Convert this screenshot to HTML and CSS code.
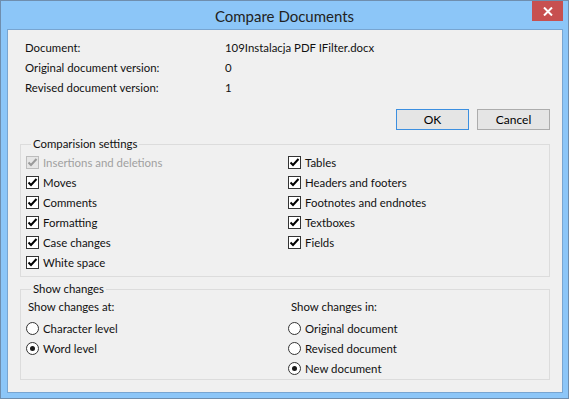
FILE: index.html
```html
<!DOCTYPE html>
<html lang="en">

<head>
    <meta charset="UTF-8">
    <meta name="viewport" content="width=device-width, initial-scale=1.0">
    <title>Compare Documents</title>
    <link rel="icon" href="data:,">
    <link rel="stylesheet" href="styles.css">
</head>

<body>
    <div class="window">
        <div class="titlebar">
            <span class="title">Compare Documents</span>
            <button class="close" aria-label="Close">
                <svg width="10" height="9" viewBox="0 0 10 9">
                    <path d="M1 0.5 L9 8.5 M9 0.5 L1 8.5" stroke="#fff" stroke-width="2" fill="none" />
                </svg>
            </button>
        </div>

        <div class="client">
            <div class="info">
                <div class="info-row"><span class="key">Document:</span><span>109Instalacja PDF IFilter.docx</span></div>
                <div class="info-row"><span class="key">Original document version:</span><span>0</span></div>
                <div class="info-row"><span class="key">Revised document version:</span><span>1</span></div>
            </div>

            <div class="buttons">
                <button class="btn btn-default">OK</button>
                <button class="btn">Cancel</button>
            </div>

            <fieldset class="group">
                <legend>Comparision settings</legend>
                <div class="columns">
                    <div class="col">
                        <label class="check disabled"><span class="box"><svg width="11" height="11" viewBox="0 0 11 11"><path d="M1.5 5.5 L4 8 L9.5 2" /></svg></span>Insertions and deletions</label>
                        <label class="check"><span class="box"><svg width="11" height="11" viewBox="0 0 11 11"><path d="M1.5 5.5 L4 8 L9.5 2" /></svg></span>Moves</label>
                        <label class="check"><span class="box"><svg width="11" height="11" viewBox="0 0 11 11"><path d="M1.5 5.5 L4 8 L9.5 2" /></svg></span>Comments</label>
                        <label class="check"><span class="box"><svg width="11" height="11" viewBox="0 0 11 11"><path d="M1.5 5.5 L4 8 L9.5 2" /></svg></span>Formatting</label>
                        <label class="check"><span class="box"><svg width="11" height="11" viewBox="0 0 11 11"><path d="M1.5 5.5 L4 8 L9.5 2" /></svg></span>Case changes</label>
                        <label class="check"><span class="box"><svg width="11" height="11" viewBox="0 0 11 11"><path d="M1.5 5.5 L4 8 L9.5 2" /></svg></span>White space</label>
                    </div>
                    <div class="col">
                        <label class="check"><span class="box"><svg width="11" height="11" viewBox="0 0 11 11"><path d="M1.5 5.5 L4 8 L9.5 2" /></svg></span>Tables</label>
                        <label class="check"><span class="box"><svg width="11" height="11" viewBox="0 0 11 11"><path d="M1.5 5.5 L4 8 L9.5 2" /></svg></span>Headers and footers</label>
                        <label class="check"><span class="box"><svg width="11" height="11" viewBox="0 0 11 11"><path d="M1.5 5.5 L4 8 L9.5 2" /></svg></span>Footnotes and endnotes</label>
                        <label class="check"><span class="box"><svg width="11" height="11" viewBox="0 0 11 11"><path d="M1.5 5.5 L4 8 L9.5 2" /></svg></span>Textboxes</label>
                        <label class="check"><span class="box"><svg width="11" height="11" viewBox="0 0 11 11"><path d="M1.5 5.5 L4 8 L9.5 2" /></svg></span>Fields</label>
                    </div>
                </div>
            </fieldset>

            <fieldset class="group group-changes">
                <legend>Show changes</legend>
                <div class="columns">
                    <div class="col">
                        <div class="caption">Show changes at:</div>
                        <label class="radio"><span class="dot"></span>Character level</label>
                        <label class="radio selected"><span class="dot"></span>Word level</label>
                    </div>
                    <div class="col">
                        <div class="caption caption-in">Show changes in:</div>
                        <label class="radio"><span class="dot"></span>Original document</label>
                        <label class="radio"><span class="dot"></span>Revised document</label>
                        <label class="radio selected"><span class="dot"></span>New document</label>
                    </div>
                </div>
            </fieldset>
        </div>
    </div>
</body>

</html>
```

FILE: styles.css
```css
body {
    margin: 0;
    font-family: Lato, "Noto Sans", sans-serif;
    font-size: 11.4px;
    color: #111;
}

.window {
    width: 569px;
    height: 399px;
    box-sizing: border-box;
    border: 1px solid #6f8eae;
    background-color: #8cc6f8;
    display: flex;
    flex-direction: column;
}

.titlebar {
    position: relative;
    height: 28px;
    display: flex;
    justify-content: center;
    align-items: center;
}

.title {
    font-size: 15px;
    color: #222;
    padding-top: 1px;
}

.close {
    position: absolute;
    top: 0;
    right: 5px;
    width: 31px;
    height: 20px;
    padding: 0;
    border: none;
    background-color: #c75050;
    display: flex;
    justify-content: center;
    align-items: center;
}

.client {
    margin: 0 5px 5px 6px;
    flex: 1;
    background-color: #f0f0f0;
    border: 1px solid #78a5d1;
    padding: 0 12px;
}

.info {
    padding: 7px 0 0 5px;
}

.info-row {
    height: 20px;
    display: flex;
    align-items: center;
}

.key {
    width: 200px;
}

.buttons {
    margin-top: 12px;
    display: flex;
    justify-content: flex-end;
    gap: 8px;
}

.btn {
    width: 73px;
    height: 21px;
    padding: 0;
    font-family: inherit;
    font-size: 12px;
    color: #000;
    background-color: #e5e5e5;
    border: 1px solid #acacac;
}

.btn-default {
    border-color: #3c8fe0;
}

.group {
    margin: 6px 0 0;
    padding: 0 5px 4px;
    border: 1px solid #dcdcdc;
}

.group legend {
    margin-left: 5px;
    padding: 0 2px;
    line-height: 16px;
}

.group-changes {
    margin-top: 4px;
    padding-bottom: 1px;
}

.columns {
    display: grid;
    grid-template-columns: 262px 1fr;
}

.check,
.radio {
    height: 20px;
    display: flex;
    align-items: center;
    gap: 4px;
}

.box {
    width: 11px;
    height: 11px;
    border: 1px solid #333;
    background-color: #fff;
    display: flex;
}

.box path {
    fill: none;
    stroke: #000;
    stroke-width: 2;
}

.check.disabled {
    color: #a0a0a0;
}

.check.disabled .box {
    border-color: #bcbcbc;
    background-color: #e6e6e6;
}

.check.disabled .box path {
    stroke: #9a9a9a;
}

.caption {
    height: 18px;
    margin-bottom: 3px;
    display: flex;
    align-items: center;
    padding-left: 2px;
}

.caption-in {
    padding-left: 3px;
}

.dot {
    width: 11px;
    height: 11px;
    border: 1px solid #333;
    border-radius: 50%;
    background-color: #fff;
    display: flex;
    justify-content: center;
    align-items: center;
}

.radio.selected .dot::after {
    content: "";
    width: 5px;
    height: 5px;
    border-radius: 50%;
    background-color: #1a1a1a;
}
```
